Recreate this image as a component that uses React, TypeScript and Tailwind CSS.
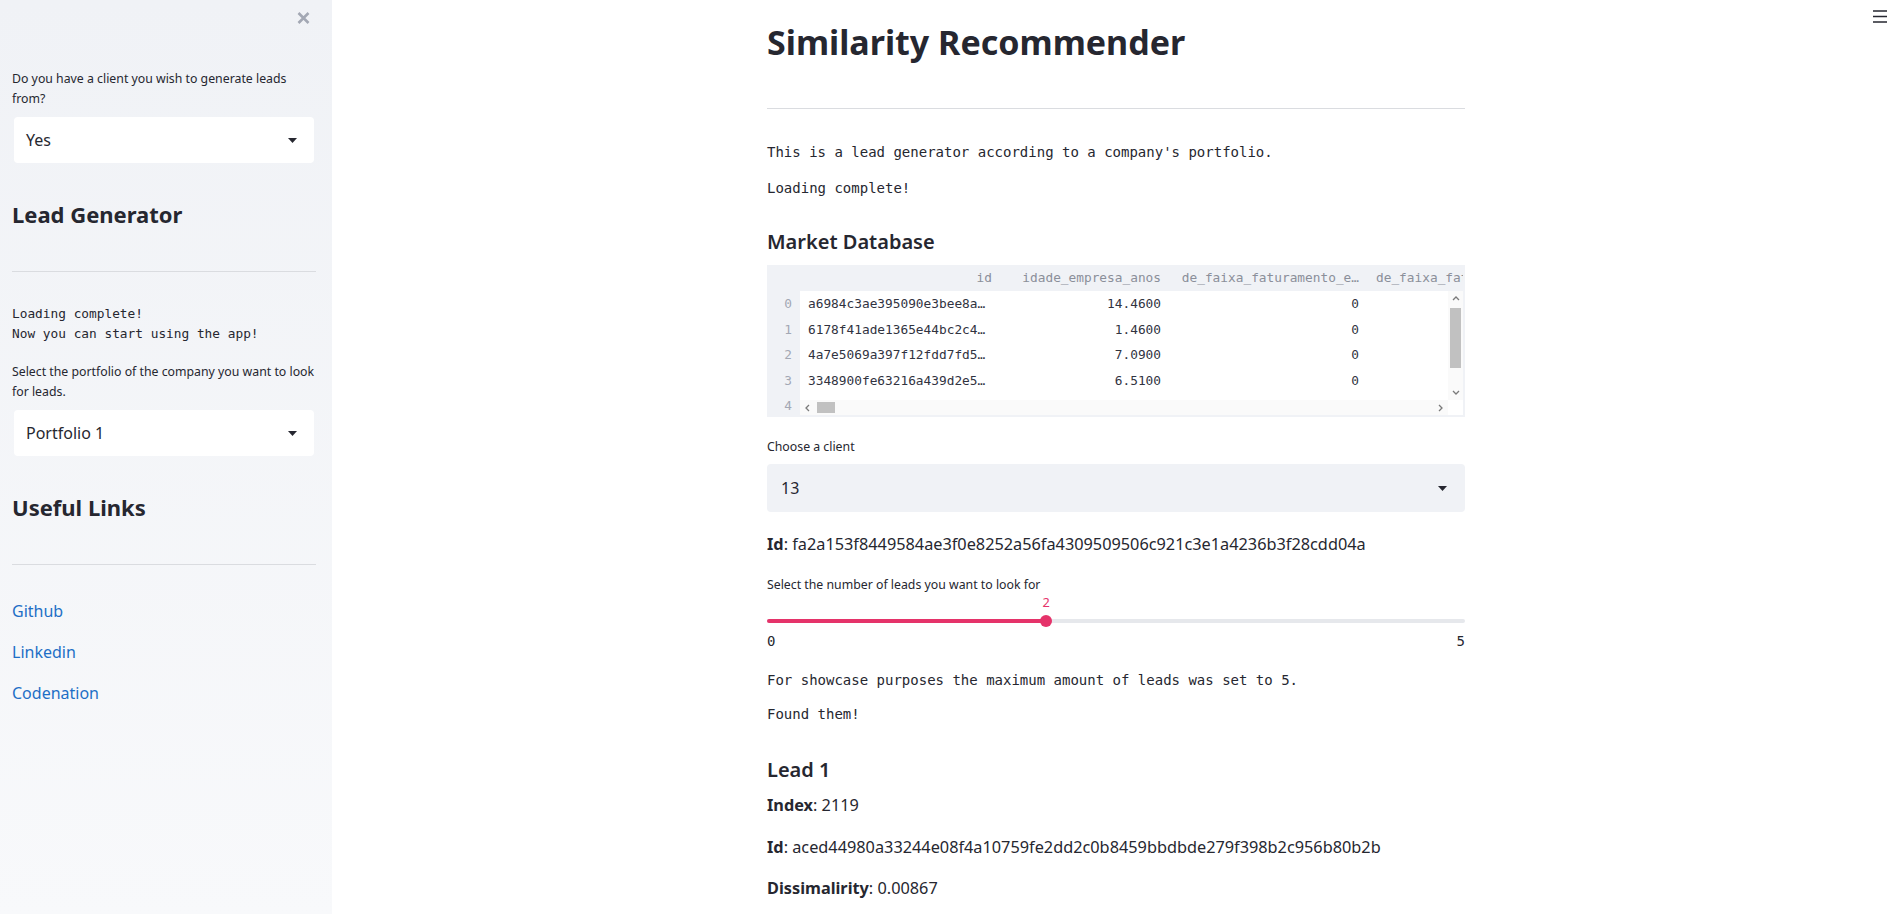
import React from "react";

const mono = "font-['DejaVu_Sans_Mono',monospace]";

const marketRows = [
  ["a6984c3ae395090e3bee8a…", "14.4600", "0"],
  ["6178f41ade1365e44bc2c4…", "1.4600", "0"],
  ["4a7e5069a397f12fdd7fd5…", "7.0900", "0"],
  ["3348900fe63216a439d2e5…", "6.5100", "0"],
  ["f2b1c4e9d7a0c8b6e31f0a…", "3.2800", "0"],
];

function Caret() {
  return (
    <svg width="9" height="5" viewBox="0 0 9 5">
      <path d="M0 0h9L4.5 5z" fill="#262730" />
    </svg>
  );
}

function Chevron({ dir }: { dir: "up" | "down" | "left" | "right" }) {
  const paths: Record<string, string> = {
    up: "M1 5 L4 2 L7 5",
    down: "M1 2 L4 5 L7 2",
    left: "M5 1 L2 4 L5 7",
    right: "M2 1 L5 4 L2 7",
  };
  return (
    <svg width="8" height="8" viewBox="0 0 8 8">
      <path d={paths[dir]} fill="none" stroke="#7a7a7a" strokeWidth="1.3" />
    </svg>
  );
}

function SelectBox({ value, light }: { value: string; light?: boolean }) {
  return (
    <div
      className={`flex items-center justify-between rounded-[4px] text-[16px] ${
        light ? "mx-[2px] h-[46px] bg-white pl-[12px] pr-[17px]" : "h-[48px] bg-[#f0f2f6] pl-[14px] pr-[18px]"
      }`}
    >
      <span>{value}</span>
      <Caret />
    </div>
  );
}

function MarketTable() {
  return (
    <div className={`mt-[9px] flex h-[152px] flex-col overflow-hidden bg-[#f0f2f6] text-[12.8px] ${mono}`}>
      {/* Header */}
      <div className="mr-[2px] flex h-[26px] shrink-0 items-center overflow-hidden whitespace-nowrap text-[#8b8f9a]">
        <div className="w-[33px] shrink-0" />
        <div className="w-[200px] shrink-0 pr-[8px] text-right">id</div>
        <div className="w-[169px] shrink-0 pr-[8px] text-right">idade_empresa_anos</div>
        <div className="w-[198px] shrink-0 pr-[8px] text-right">de_faixa_faturamento_e…</div>
        <div className="shrink-0 pl-[9px]">de_faixa_faturamento_estimado_grupo</div>
      </div>

      {/* Body */}
      <div className="flex min-h-0 flex-1 pb-[2px] pr-[2px]">
        <div className="w-[33px] shrink-0 overflow-hidden text-[#a3a8b4]">
          {marketRows.map((_, i) => (
            <div key={i} className="h-[25.5px] pr-[8px] text-right leading-[25.5px]">
              {i}
            </div>
          ))}
        </div>
        <div className="relative min-h-0 flex-1 overflow-hidden bg-white">
          {marketRows.map((row, i) => (
            <div key={i} className="flex h-[25.5px] items-center whitespace-nowrap leading-[25.5px] text-[#31333f]">
              <div className="w-[200px] shrink-0 pl-[8px]">{row[0]}</div>
              <div className="w-[169px] shrink-0 pr-[8px] text-right">{row[1]}</div>
              <div className="w-[198px] shrink-0 pr-[8px] text-right">{row[2]}</div>
            </div>
          ))}

          {/* vertical scrollbar */}
          <div className="absolute right-0 top-0 bottom-[15px] w-[15px] bg-[#fafafa]">
            <div className="flex h-[15px] items-center justify-center">
              <Chevron dir="up" />
            </div>
            <div className="absolute left-[2px] right-[2px] top-[17px] h-[60px] bg-[#c1c1c1]" />
            <div className="absolute bottom-0 left-0 flex h-[15px] w-[15px] items-center justify-center">
              <Chevron dir="down" />
            </div>
          </div>

          {/* horizontal scrollbar */}
          <div className="absolute bottom-0 left-0 right-[15px] h-[15px] bg-[#fafafa]">
            <div className="absolute left-0 top-0 flex h-[15px] w-[15px] items-center justify-center">
              <Chevron dir="left" />
            </div>
            <div className="absolute left-[17px] top-[2px] bottom-[2px] w-[18px] bg-[#c1c1c1]" />
            <div className="absolute right-0 top-0 flex h-[15px] w-[15px] items-center justify-center">
              <Chevron dir="right" />
            </div>
          </div>
          <div className="absolute bottom-0 right-0 h-[15px] w-[15px] bg-white" />
        </div>
      </div>
    </div>
  );
}

function LeadSlider({ value, max }: { value: number; max: number }) {
  const pct = `${(value / max) * 100}%`;
  return (
    <div>
      <div className="relative h-[14px]">
        <span
          className="absolute top-0 -translate-x-1/2 text-[12.8px] leading-[14px] text-[#e5336a]"
          style={{ left: pct }}
        >
          {value}
        </span>
      </div>
      <div className="relative mt-[10px] h-[4px] rounded-full bg-[#e6e8ec]">
        <div className="h-[4px] rounded-full bg-[#e5336a]" style={{ width: pct }} />
        <div
          className="absolute top-1/2 h-[12px] w-[12px] -translate-x-1/2 -translate-y-1/2 rounded-full bg-[#e5336a]"
          style={{ left: pct }}
        />
      </div>
      <div className={`mt-[8px] flex justify-between text-[14px] leading-[20px] ${mono}`}>
        <span>0</span>
        <span>{max}</span>
      </div>
    </div>
  );
}

export default function App() {
  return (
    <div className="flex min-h-screen bg-white font-['Noto_Sans',sans-serif] text-[#262730]">
      {/* Sidebar */}
      <aside className="h-[914px] w-[332px] shrink-0 bg-linear-to-b from-[#f0f2f6] to-[#f8f9fb] pl-[12px] pr-[16px]">
        <div className="flex h-[36px] items-center justify-end pr-[6px]">
          <svg width="13" height="12" viewBox="0 0 13 12">
            <path d="M1.5 1 L11.5 11 M11.5 1 L1.5 11" stroke="#a3a8b4" strokeWidth="2.6" />
          </svg>
        </div>

        <p className="mt-[33px] text-[12.3px] leading-[20px]">Do you have a client you wish to generate leads from?</p>
        <div className="mt-[8px]">
          <SelectBox value="Yes" light />
        </div>

        <h2 className="mt-[35px] text-[22px] font-bold leading-[32px]">Lead Generator</h2>
        <hr className="mt-[41px] border-t border-[#dadce0]" />

        <pre className={`mt-[32px] text-[12.8px] leading-[20px] ${mono}`}>
          {"Loading complete!\nNow you can start using the app!"}
        </pre>

        <p className="mt-[18px] text-[12.3px] leading-[20px]">
          Select the portfolio of the company you want to look for leads.
        </p>
        <div className="mt-[8px]">
          <SelectBox value="Portfolio 1" light />
        </div>

        <h2 className="mt-[35px] text-[22px] font-bold leading-[32px]">Useful Links</h2>
        <hr className="mt-[41px] border-t border-[#dadce0]" />

        <div className="mt-[34px] flex flex-col gap-[17px] text-[16px] leading-[24px] text-[#1e6fc6]">
          <a href="#">Github</a>
          <a href="#">Linkedin</a>
          <a href="#">Codenation</a>
        </div>
      </aside>

      {/* Main */}
      <main className="relative flex-1">
        <div className="ml-[435px] w-[698px] pb-[40px] pt-[18px]">
          <h1 className="text-[34px] font-bold leading-[48px]">Similarity Recommender</h1>
          <hr className="mt-[42px] border-t border-[#dadce0]" />

          <p className={`mt-[33px] text-[14px] leading-[20px] ${mono}`}>
            This is a lead generator according to a company's portfolio.
          </p>
          <p className={`mt-[16px] text-[14px] leading-[20px] ${mono}`}>Loading complete!</p>

          <h3 className="mt-[30px] text-[20px] font-semibold leading-[28px]">Market Database</h3>
          <MarketTable />

          <p className="mt-[20px] text-[12.3px] leading-[20px]">Choose a client</p>
          <div className="mt-[7px]">
            <SelectBox value="13" />
          </div>

          <p className="mt-[20px] text-[16.3px] leading-[24px]">
            <b>Id</b>: fa2a153f8449584ae3f0e8252a56fa4309509506c921c3e1a4236b3f28cdd04a
          </p>

          <p className="mt-[19px] text-[12.3px] leading-[20px]">Select the number of leads you want to look for</p>
          <LeadSlider value={2} max={5} />

          <p className={`mt-[19px] text-[14px] leading-[20px] ${mono}`}>
            For showcase purposes the maximum amount of leads was set to 5.
          </p>
          <p className={`mt-[14px] text-[14px] leading-[20px] ${mono}`}>Found them!</p>

          <h3 className="mt-[32px] text-[20px] font-semibold leading-[28px]">Lead 1</h3>
          <p className="mt-[9px] text-[16.3px] leading-[24px]">
            <b>Index</b>: 2119
          </p>
          <p className="mt-[18px] text-[16.3px] leading-[24px]">
            <b>Id</b>: aced44980a33244e08f4a10759fe2dd2c0b8459bbdbde279f398b2c956b80b2b
          </p>
          <p className="mt-[17px] text-[16.3px] leading-[24px]">
            <b>Dissimalirity</b>: 0.00867
          </p>
        </div>

        {/* Hamburger menu */}
        <button className="absolute right-[7px] top-[10px]">
          <svg width="14" height="13" viewBox="0 0 14 13" className="block">
            <path d="M0 1h14M0 6.5h14M0 12h14" stroke="#262730" strokeWidth="1.5" />
          </svg>
        </button>
      </main>
    </div>
  );
}
